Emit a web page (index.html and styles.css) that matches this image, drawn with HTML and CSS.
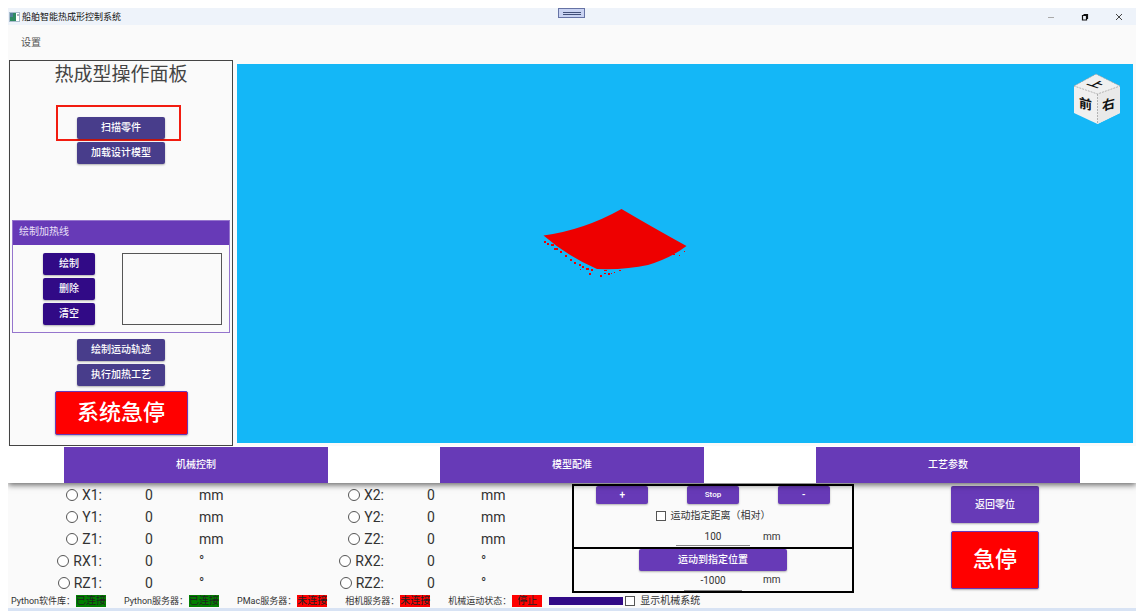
FILE: index.html
```html
<!DOCTYPE html>
<html lang="zh-CN">
<head>
<meta charset="utf-8">
<title>船舶智能热成形控制系统</title>
<link rel="stylesheet" href="styles.css">
</head>
<body>
<div class="window">
  <header class="titlebar">
    <svg class="app-icon" width="11" height="10" viewBox="0 0 11 10"><rect x="0.5" y="0.5" width="10" height="9" fill="#fff" stroke="#a9bccd"/><rect x="1" y="1" width="6" height="8" fill="#2f8a62"/><rect x="1" y="1" width="3" height="4" fill="#4f7f9a"/><path d="M9 2v2" stroke="#567"/></svg>
    <h1 class="app-name">船舶智能热成形控制系统</h1>
    <button class="dock-handle" aria-label="工具栏"></button>
    <div class="window-buttons">
      <button class="window-button" aria-label="最小化"><svg width="8" height="8" viewBox="0 0 8 8"><path d="M1 4.5h6" stroke="#aaa" fill="none"/></svg></button>
      <button class="window-button" aria-label="还原"><svg width="8" height="8" viewBox="0 0 8 8"><path d="M1.500 2.500h4v4.500h-4zM2.500 1.500h4v4.500" stroke="#111" stroke-width="1.200" fill="none"/></svg></button>
      <button class="window-button" aria-label="关闭"><svg width="8" height="8" viewBox="0 0 8 8"><path d="M1 1l6 6M7 1l-6 6" stroke="#444" fill="none"/></svg></button>
    </div>
  </header>
  <nav class="menubar"><button class="menu-item">设置</button></nav>

  <main class="workspace">
    <aside class="panel">
      <h2 class="panel-title">热成型操作面板</h2>
      <div class="button-stack load-actions">
        <div class="highlighted"><button class="button slate">扫描零件</button></div>
        <button class="button slate">加载设计模型</button>
      </div>
      <section class="group">
        <h3 class="group-title">绘制加热线</h3>
        <div class="group-body">
          <div class="button-stack">
            <button class="button indigo">绘制</button>
            <button class="button indigo">删除</button>
            <button class="button indigo">清空</button>
          </div>
          <div class="line-list" role="listbox" aria-label="加热线"></div>
        </div>
      </section>
      <div class="button-stack run-actions">
        <button class="button slate">绘制运动轨迹</button>
        <button class="button slate">执行加热工艺</button>
      </div>
      <button class="button stop system-stop">系统急停</button>
    </aside>

    <section class="viewport" aria-label="三维视图">
      <svg class="scene" viewBox="0 0 896 379">
        <g fill="#ee0000">
          <path d="M306.500 171.500Q347 166 384.500 145Q415 163 449.500 182Q434 194 411 201Q389 206 360 205Q330 192 306.500 171.500Z"/>
          <path d="M307 177h2v2h-2zM310 179h2v2h-2zM314 180h3v2h-3zM317 184h4v2h-4zM323 187h2v2h-2zM328 191h2v2h-2zM333 195h2v2h-2zM337 198h2v2h-2zM342 200h2v2h-2zM345 202h2v2h-2zM349 204h3v2h-3zM354 205h2v2h-2zM343 205h1v1h-1zM352 209h2v2h-2zM363 211h2v2h-2zM367 209h2v1h-2zM371 209h2v2h-2zM374 209h1v1h-1zM377 208h1v1h-1zM367 206h3v1h-3zM382 206h2v1h-2zM436 190h2v1h-2zM442 191h1v1h-1zM447 187h1v1h-1z"/>
        </g>
      </svg>
      <button class="view-cube" aria-label="视图方向">
        <svg width="48" height="52" viewBox="0 0 48 52">
          <path d="M23 1L47 13V40L24.500 51 1 40V13Z" fill="#f0f0f0"/>
          <path d="M24.500 21L47 13V40L24.500 51Z" fill="#e9e9e9"/>
          <path d="M1 13L23 1 47 13 24.500 21ZM24.500 21V51" fill="none" stroke="#999" stroke-width="0.700" stroke-dasharray="2 1"/>
          <text class="cube-label" transform="translate(6 34) skewY(14)">前</text>
          <text class="cube-label" transform="translate(29 38) skewY(-16)">右</text>
          <text class="cube-label" transform="matrix(0.95 0.33 -0.8 0.45 13 11)">上</text>
        </svg>
      </button>
    </section>
  </main>

  <nav class="tabs">
    <div class="tab-cell"><button class="tab">机械控制</button></div>
    <div class="tab-cell"><button class="tab">模型配准</button></div>
    <div class="tab-cell"><button class="tab">工艺参数</button></div>
  </nav>

  <section class="controls">
    <div class="axes">
      <label class="axis"><input type="radio" name="axis" class="radio">X1:</label><output class="value">0</output><span class="unit">mm</span>
      <label class="axis"><input type="radio" name="axis" class="radio">Y1:</label><output class="value">0</output><span class="unit">mm</span>
      <label class="axis"><input type="radio" name="axis" class="radio">Z1:</label><output class="value">0</output><span class="unit">mm</span>
      <label class="axis"><input type="radio" name="axis" class="radio">RX1:</label><output class="value">0</output><span class="unit">°</span>
      <label class="axis"><input type="radio" name="axis" class="radio">RZ1:</label><output class="value">0</output><span class="unit">°</span>
    </div>
    <div class="axes">
      <label class="axis"><input type="radio" name="axis" class="radio">X2:</label><output class="value">0</output><span class="unit">mm</span>
      <label class="axis"><input type="radio" name="axis" class="radio">Y2:</label><output class="value">0</output><span class="unit">mm</span>
      <label class="axis"><input type="radio" name="axis" class="radio">Z2:</label><output class="value">0</output><span class="unit">mm</span>
      <label class="axis"><input type="radio" name="axis" class="radio">RX2:</label><output class="value">0</output><span class="unit">°</span>
      <label class="axis"><input type="radio" name="axis" class="radio">RZ2:</label><output class="value">0</output><span class="unit">°</span>
    </div>
    <div class="motion">
      <div class="jog">
        <div class="jog-buttons">
          <button class="button violet jog-button">+</button>
          <button class="button violet jog-button jog-stop">Stop</button>
          <button class="button violet jog-button">-</button>
        </div>
        <label class="check-label relative-move"><input type="checkbox" class="check">运动指定距离（相对）</label>
        <div class="distance"><input class="field" type="text" value="100" aria-label="距离"><span class="field-unit">mm</span></div>
      </div>
      <div class="move-to">
        <button class="button violet move-button">运动到指定位置</button>
        <div class="distance"><input class="field short" type="text" value="-1000" aria-label="位置"><span class="field-unit">mm</span></div>
      </div>
    </div>
    <div class="safety">
      <button class="button violet home-button">返回零位</button>
      <button class="button stop halt-button">急停</button>
    </div>
  </section>

  <footer class="statusbar">
    <div class="status">Python软件库：<span class="chip ok">已连接</span></div>
    <div class="status">Python服务器：<span class="chip ok">已连接</span></div>
    <div class="status">PMac服务器：<span class="chip bad">未连接</span></div>
    <div class="status">相机服务器：<span class="chip bad">未连接</span></div>
    <div class="status">机械运动状态：<span class="chip bad">停止</span></div>
    <div class="progress" role="progressbar" aria-label="进度"></div>
    <label class="check-label show-machine"><input type="checkbox" class="check">显示机械系统</label>
  </footer>
</div>
</body>
</html>
```

FILE: styles.css
```css
* { box-sizing: border-box; }

body {
  margin: 0;
  padding: 8px 1px 1px 8px;
  background: #fff;
  color: #333;
  font-family: Roboto, "Noto Sans CJK SC", sans-serif;
  font-size: 10px;
  line-height: 14px;
}

h1, h2, h3 { margin: 0; font-weight: 400; }

button, input {
  margin: 0;
  padding: 0;
  border: 0;
  font: inherit;
  color: inherit;
}

svg { display: block; }

.window {
  display: flex;
  flex-direction: column;
  min-height: calc(100vh - 9px);
  background: #fafafa;
  border-bottom: 3px solid #d8e3f4;
}

/* Title bar and menu */
.titlebar {
  position: relative;
  display: flex;
  align-items: center;
  gap: 2px;
  height: 17px;
  background: #eef3fa;
}

.app-icon { margin-left: 1px; }
.app-name { font-size: 9px; color: #111; }

.dock-handle {
  position: absolute;
  top: 0;
  left: calc(50% - 14px);
  width: 27px;
  height: 10px;
  border: 1px solid #6673a5;
  background: linear-gradient(#414f78, #414f78) center 3px / 18px 1px no-repeat,
    linear-gradient(#414f78, #414f78) center 5px / 18px 1px no-repeat, #c9d3f2;
}

.window-buttons { display: flex; margin-left: auto; }

.window-button {
  display: grid;
  place-items: center;
  width: 34px;
  height: 16px;
  background: none;
}

.menubar { display: flex; align-items: center; height: 35px; padding-left: 13px; }
.menu-item { background: none; color: #555; }

/* Work area */
.workspace { display: flex; flex: 1; }

.panel {
  display: flex;
  flex-direction: column;
  align-items: center;
  width: 224px;
  margin-left: 1px;
  padding: 0 2px 10px;
  border: 1px solid #444;
}

.panel-title { font-size: 19px; line-height: 28px; color: #444; }

.button-stack { display: flex; flex-direction: column; align-items: center; gap: 3px; }

.button {
  height: 22px;
  border-radius: 2px;
  color: #fff;
  font-weight: 500;
  box-shadow: 0 1px 2px rgba(0, 0, 0, 0.3);
}

.slate { width: 88px; background: #483d8b; }
.indigo { width: 52px; background: #310a86; }
.violet { background: #673ab7; }
.stop { background: #f00; border: 1px solid #673ab7; font-size: 22px; line-height: 30px; }

.load-actions { margin-top: 16px; gap: 1px; }

.highlighted {
  display: flex;
  justify-content: center;
  width: 125px;
  margin-right: 6px;
  padding: 10px 0 0 6px;
  height: 36px;
  border: 2px solid #f21c10;
}

.group { align-self: stretch; margin-top: auto; border: 1px solid #9575cd; }

.group-title {
  height: 24px;
  padding-left: 6px;
  background: #673ab7;
  color: #e9e0f7;
  font-size: 10px;
  line-height: 21px;
}

.group-body { display: flex; justify-content: space-between; padding: 8px 7px 7px 30px; }
.line-list { width: 100px; border: 1px solid #555; }

.run-actions { margin-top: 6px; }
.system-stop { width: 133px; height: 44px; margin-top: 5px; }

.viewport { position: relative; flex: 1; margin: 4px 3px 3px 4px; background: #14b7f7; }
.scene { position: absolute; width: 100%; height: 100%; }

.view-cube { position: absolute; top: 9px; right: 12px; background: none; }
.cube-label { font-size: 13px; font-weight: 700; fill: #111; }

/* Page tabs */
.tabs {
  position: relative;
  display: flex;
  height: 37px;
  padding-top: 1px;
  background: #fff;
  box-shadow: 0 2px 6px rgba(0, 0, 0, 0.6);
  clip-path: inset(0 0 -12px 0);
}

.tab-cell { display: flex; flex: 1; justify-content: center; }
.tab { width: 70%; background: #673ab7; color: #fff; font-weight: 500; }

/* Machine control */
.controls {
  display: grid;
  grid-template-columns: repeat(4, 1fr);
  padding-top: 1px;
}

.axes {
  display: grid;
  grid-template-columns: repeat(3, 1fr);
  grid-auto-rows: 22px;
  line-height: 22px;
  font-size: 14px;
}

.axis { display: flex; align-items: center; justify-content: flex-end; gap: 4px; }
.value { text-align: center; }
.unit { padding-left: 3px; }

.radio, .check { appearance: none; flex: none; background: #fff; border: 1px solid #555; }
.radio { width: 12px; height: 12px; border-radius: 50%; }
.check { width: 10px; height: 10px; }

.motion { align-self: start; border: 2px solid #000; }
.jog { height: 63px; border-bottom: 2px solid #000; }

.jog-buttons {
  display: grid;
  grid-template-columns: repeat(3, 1fr);
  justify-items: center;
  padding: 0 3px;
}

.jog-button { width: 52px; height: 18px; line-height: 16px; }
.jog-stop { font-size: 8px; }

.check-label { display: flex; align-items: center; gap: 5px; }
.relative-move { justify-content: center; height: 24px; }

.distance {
  display: grid;
  grid-template-columns: 1fr 74px 1fr;
  justify-items: center;
}

.field {
  grid-column: 2;
  width: 74px;
  height: 18px;
  border-bottom: 1px solid #888;
  background: none;
  text-align: center;
}

.short { width: 58px; height: 20px; }
.field-unit { justify-self: start; padding-left: 13px; line-height: 18px; }
.move-button { display: block; width: 148px; height: 22px; margin: 0 auto; }

.safety { display: flex; flex-direction: column; align-items: center; gap: 8px; padding-top: 2px; }
.home-button { width: 88px; height: 37px; }
.halt-button { width: 88px; height: 58px; }

/* Status bar */
.statusbar { display: flex; align-items: center; height: 14px; padding-left: 3px; font-size: 9px; }
.status { display: flex; align-items: center; margin-right: 18px; white-space: nowrap; }
.chip { width: 30px; margin-left: 1px; font-size: 10px; line-height: 12px; text-align: center; color: #222; }
.ok { background: #008000; }
.bad { background: #f00; }
.status:has(+ .progress) { margin-right: 7px; }
.progress { width: 74px; height: 8px; background: #310a86; }
.show-machine { margin-left: 2px; font-size: 10px; }
```
